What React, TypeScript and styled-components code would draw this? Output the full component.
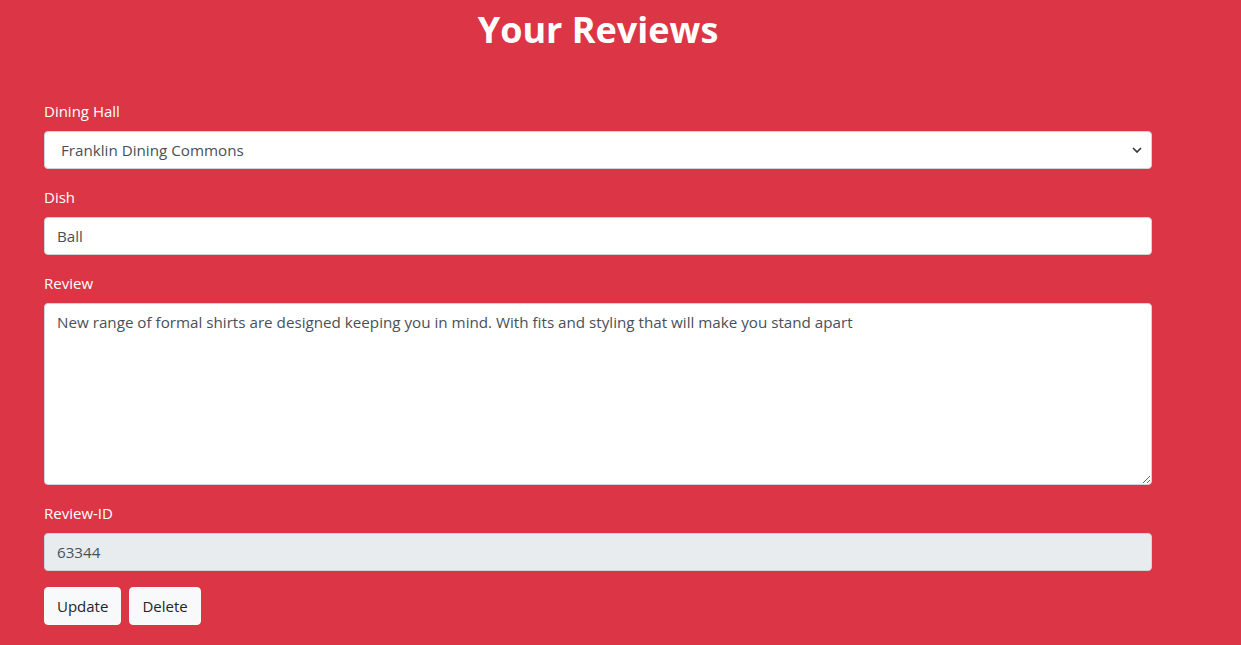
import React from "react";
import styled, { createGlobalStyle } from "styled-components";

const Global = createGlobalStyle`
  html, body { margin: 0; padding: 0; background: #dc3545; }
  body { font-family: "Open Sans", "Noto Sans", sans-serif; font-size: 16px; line-height: 1.5; color: #212529; }
  * { box-sizing: border-box; }
`;

const Page = styled.div`
  min-height: 645px;
  background: #dc3545;
  padding: 0 89px 0 44px;
`;

const Title = styled.h1`
  margin: 0;
  padding-top: 6px;
  height: 99px;
  text-align: center;
  color: #fff;
  font-size: 36px;
  font-weight: 700;
  line-height: 48px;
`;

const Form = styled.form`
  width: 1108px;
  display: flex;
  flex-direction: column;
`;

const Field = styled.div`
  display: flex;
  flex-direction: column;
  margin-bottom: 16px;
`;

const Label = styled.label`
  color: #fff;
  font-size: 15px;
  line-height: 24px;
  margin-bottom: 8px;
`;

const controlCss = `
  width: 100%;
  font-family: "Open Sans", "Noto Sans", sans-serif;
  font-size: 15.2px;
  line-height: 24px;
  color: #495057;
  background: #fff;
  border: 1px solid #ced4da;
  border-radius: 4px;
  outline: none;
`;

const Input = styled.input<{ $disabled?: boolean }>`
  ${controlCss}
  height: 38px;
  padding: 6px 12px;
  background: ${(p) => (p.$disabled ? "#e9ecef" : "#fff")};
  &:disabled { color: #495057; opacity: 1; }
`;

const SelectWrap = styled.div`
  position: relative;
`;

const Select = styled.select`
  ${controlCss}
  height: 38px;
  padding: 6px 12px 6px 16px;
  appearance: none;
  -webkit-appearance: none;
`;

const Chevron = styled.svg`
  position: absolute;
  right: 10px;
  top: 16px;
  width: 10px;
  height: 6px;
  pointer-events: none;
`;

const TextArea = styled.textarea`
  ${controlCss}
  height: 182px;
  padding: 6px 12px;
  resize: vertical;
  display: block;
`;

const Buttons = styled.div`
  display: flex;
  gap: 8px;
`;

const Button = styled.button`
  height: 38px;
  padding: 6px 12px;
  font-family: "Open Sans", "Noto Sans", sans-serif;
  font-size: 15px;
  line-height: 24px;
  color: #212529;
  background: #f8f9fa;
  border: 1px solid #f8f9fa;
  border-radius: 4px;
`;

export default function App() {
  return (
    <Page>
      <Global />
      <Title>Your Reviews</Title>
      <Form onSubmit={(e) => e.preventDefault()}>
        <Field>
          <Label>Dining Hall</Label>
          <SelectWrap>
            <Select defaultValue="franklin">
              <option value="franklin">Franklin Dining Commons</option>
              <option value="worcester">Worcester Dining Commons</option>
              <option value="berkshire">Berkshire Dining Commons</option>
              <option value="hampshire">Hampshire Dining Commons</option>
            </Select>
            <Chevron viewBox="0 0 10 6">
              <path d="M1 1 L5 5 L9 1" fill="none" stroke="#333" strokeWidth="1.6" />
            </Chevron>
          </SelectWrap>
        </Field>
        <Field>
          <Label>Dish</Label>
          <Input defaultValue="Ball" />
        </Field>
        <Field>
          <Label>Review</Label>
          <TextArea defaultValue="New range of formal shirts are designed keeping you in mind. With fits and styling that will make you stand apart" />
        </Field>
        <Field>
          <Label>Review-ID</Label>
          <Input $disabled disabled defaultValue="63344" />
        </Field>
        <Buttons>
          <Button type="button">Update</Button>
          <Button type="button">Delete</Button>
        </Buttons>
      </Form>
    </Page>
  );
}
